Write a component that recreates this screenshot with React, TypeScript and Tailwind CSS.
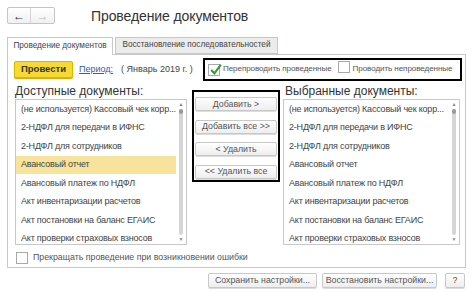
import React from "react";

const docs = [
    "(не используется) Кассовый чек корр...",
    "2-НДФЛ для передачи в ИФНС",
    "2-НДФЛ для сотрудников",
    "Авансовый отчет",
    "Авансовый платеж по НДФЛ",
    "Акт инвентаризации расчетов",
    "Акт постановки на баланс ЕГАИС",
    "Акт проверки страховых взносов",
];

function Check({ checked }: { checked?: boolean }) {
    return (
        <span className="relative inline-block w-[12px] h-[12px] border border-[#a9a9a9] bg-white shrink-0">
            {checked && (
                <svg viewBox="0 0 12 12" className="absolute left-[0px] top-[-2px] w-[13px] h-[13px]">
                    <path d="M2 6.5 L5 9.5 L11 1.5" stroke="#3c9a3c" strokeWidth="2" fill="none" />
                </svg>
            )}
        </span>
    );
}

function DocList({ highlight }: { highlight?: number }) {
    return (
        <div className="relative h-[146px] border border-[#c8c8c8] bg-white overflow-hidden">
            <div className="pr-[10px]">
                {docs.map((d, i) => (
                    <div
                        key={d}
                        className={
                            "h-[18.5px] flex items-center pl-[5px] text-[9px] tracking-[-0.2px] text-[#444] whitespace-nowrap overflow-hidden " +
                            (i === highlight ? "bg-[#f8e39c]" : "")
                        }
                    >
                        {d}
                    </div>
                ))}
            </div>
            {/* scrollbar */}
            <div className="absolute right-[2px] top-[1px] bottom-[1px] w-[6px] flex flex-col items-center">
                <span className="text-[5px] leading-[7px] text-[#888]">▲</span>
                <div className="flex-1 w-[4px] rounded-full bg-[#d6d6d6] my-[1px] relative">
                    <div className="absolute top-0 left-0 w-[4px] h-[5px] rounded-full bg-[#9a9a9a]" />
                </div>
                <span className="text-[5px] leading-[7px] text-[#888]">▼</span>
            </div>
        </div>
    );
}

function Btn({ w, children }: { w: string; children: React.ReactNode }) {
    return (
        <button
            className={
                w +
                " border border-[#c8c8c8] rounded-[2px] bg-gradient-to-b from-white to-[#eeeeee] text-[8.8px] leading-none text-[#555] whitespace-nowrap shadow-[0_1px_0_#ddd]"
            }
        >
            {children}
        </button>
    );
}

export default function App() {
    return (
        <div
            className="w-[474px] h-[293px] bg-white overflow-hidden text-[#444] whitespace-nowrap"
            style={{ fontFamily: '"Liberation Sans", Arial, sans-serif' }}
        >
            {/* header */}
            <div className="flex items-center pt-[7px] pl-[7px] h-[24px]">
                <div className="flex h-[17px] border border-[#c4c4c4] rounded-[2px] bg-gradient-to-b from-white to-[#f0f0f0]">
                    <div className="w-[23px] flex items-center justify-center border-r border-[#d4d4d4] text-[12px] text-[#333] font-bold leading-none">
                        ←
                    </div>
                    <div className="w-[23px] flex items-center justify-center text-[12px] text-[#bbb] leading-none">
                        →
                    </div>
                </div>
                <div className="ml-[36px] text-[14px] tracking-[-0.1px] text-[#333] leading-none mt-[1px]">
                    Проведение документов
                </div>
            </div>

            {/* tabs */}
            <div className="flex items-end mt-[13px] pl-[7px] h-[17px]">
                <div className="h-[18px] w-[106px] border border-b-0 border-[#c8c8c8] bg-white flex items-center justify-center text-[8.2px] text-[#444] relative z-10 mb-[-1px]">
                    Проведение документов
                </div>
                <div className="h-[17px] w-[163px] ml-[2px] border border-[#c8c8c8] bg-[#ececec] flex items-center justify-center text-[8.2px] text-[#444]">
                    Восстановление последовательностей
                </div>
            </div>

            {/* panel */}
            <div className="mx-[7px] w-[459px] h-[214px] border border-[#c8c8c8] pl-[6px] pr-[3px]">
                <div className="flex items-center mt-[3px] h-[23px]">
                    <button className="h-[17px] w-[59px] rounded-[2px] border border-[#d9b800] bg-[#f6d932] text-[9.5px] font-bold text-[#333] shadow-[0_1px_1px_#c9a800]">
                        Провести
                    </button>
                    <span className="ml-[6px] text-[9px] text-[#3a5ba8] underline">Период:</span>
                    <span className="ml-[8px] text-[9px] text-[#444]">( Январь 2019 г. )</span>
                    <div className="ml-auto w-[259px] h-[23px] border-2 border-black flex items-center pl-[3px] gap-[3px] text-[8.1px] tracking-[-0.1px] text-[#555]">
                        <Check checked />
                        <span>Перепроводить проведенные</span>
                        <span className="ml-[3px]">
                            <Check />
                        </span>
                        <span>Проводить непроведенные</span>
                    </div>
                </div>

                <div className="flex mt-[2px]">
                    <div className="w-[172px] ml-[1px]">
                        <div className="text-[12px] text-[#333] h-[16px] leading-[16px]">Доступные документы:</div>
                        <DocList highlight={3} />
                    </div>
                    <div className="ml-[5px] mt-[7px] w-[88px] h-[92px] border-2 border-black flex flex-col items-center pt-[5px] gap-[8.5px]">
                        <Btn w="h-[14px] w-[82px]">Добавить &gt;</Btn>
                        <Btn w="h-[14px] w-[82px]">Добавить все &gt;&gt;</Btn>
                        <Btn w="h-[14px] w-[82px]">&lt; Удалить</Btn>
                        <Btn w="h-[14px] w-[82px]">&lt;&lt; Удалить все</Btn>
                    </div>
                    <div className="w-[177px] ml-[3px]">
                        <div className="text-[12px] text-[#333] h-[16px] leading-[16px] pl-[2px]">Выбранные документы:</div>
                        <DocList />
                    </div>
                </div>

                <div className="flex items-center gap-[5px] mt-[6px] ml-[2px] text-[8.8px] text-[#555]">
                    <Check />
                    <span>Прекращать проведение при возникновении ошибки</span>
                </div>
            </div>

            {/* bottom buttons */}
            <div className="flex justify-end gap-[5px] mt-[5px] pr-[9px]">
                <Btn w="h-[15px] w-[109px]">Сохранить настройки...</Btn>
                <Btn w="h-[15px] w-[115px]">Восстановить настройки...</Btn>
                <Btn w="h-[15px] w-[20px] ml-[3px]">?</Btn>
            </div>
        </div>
    );
}
